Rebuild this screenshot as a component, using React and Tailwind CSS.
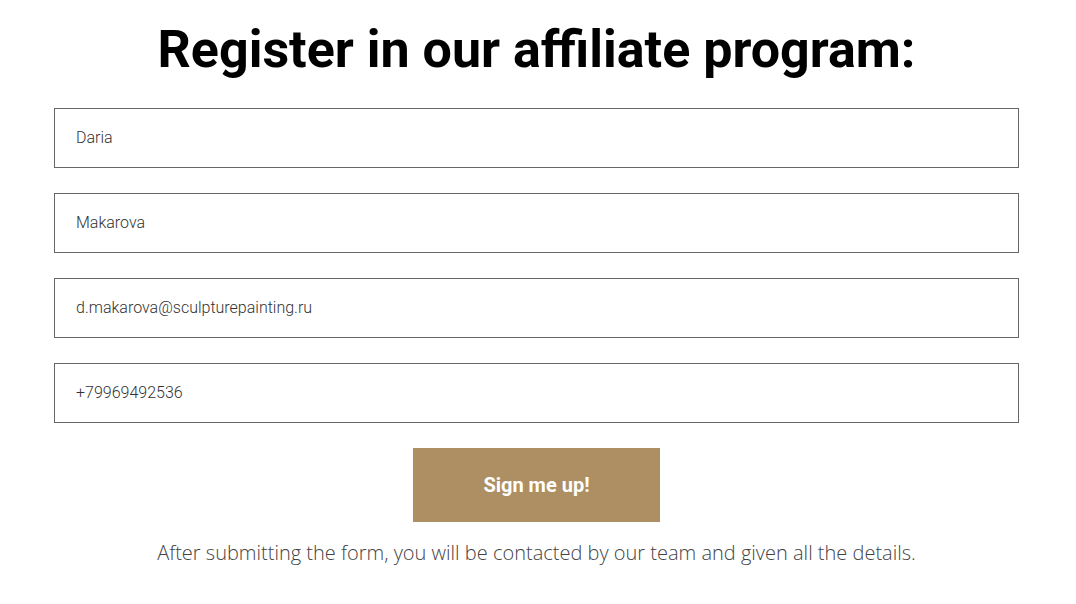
import { useState } from 'react';

const FIELDS = [
  { name: 'firstName', value: 'Daria' },
  { name: 'lastName', value: 'Makarova' },
  { name: 'email', value: 'd.makarova@sculpturepainting.ru' },
  { name: 'phone', value: '+79969492536' },
];

export default function App() {
  const [values, setValues] = useState(
    Object.fromEntries(FIELDS.map((f) => [f.name, f.value]))
  );

  return (
    <div className="min-h-[604px] bg-white pt-[20px] pl-[54px] w-[1076px]">
      <div className="w-[965px] flex flex-col items-center">
        {/* Title */}
        <h1 className="font-['Roboto',sans-serif] font-bold text-[52px] leading-[60px] text-black">
          Register in our affiliate program:
        </h1>

        {/* Inputs */}
        <form className="w-full mt-[28px] flex flex-col gap-[25px]" onSubmit={(e) => e.preventDefault()}>
          {FIELDS.map((f) => (
            <input
              key={f.name}
              type="text"
              value={values[f.name]}
              onChange={(e) => setValues({ ...values, [f.name]: e.target.value })}
              className="w-full h-[60px] border border-[#666] bg-white px-[21px] pb-[2px] font-['Roboto',sans-serif] font-light text-[16px] text-[#333] outline-none"
            />
          ))}

          <div className="flex justify-center">
            <button
              type="submit"
              className="w-[247px] h-[74px] bg-[#ad8f63] text-white font-['Roboto',sans-serif] font-bold text-[20px]"
            >
              Sign me up!
            </button>
          </div>
        </form>

        {/* Note */}
        <p className="mt-[17px] font-['Open_Sans',sans-serif] font-light text-[20px] leading-[28px] text-[#444]">
          After submitting the form, you will be contacted by our team and given all the details.
        </p>
      </div>
    </div>
  );
}
